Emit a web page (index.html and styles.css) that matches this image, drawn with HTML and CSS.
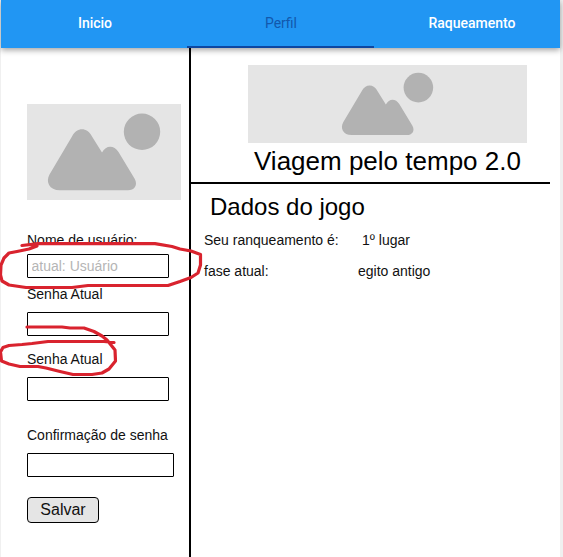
FILE: index.html
```html
<!DOCTYPE html>
<html lang="pt-BR">
<head>
<meta charset="utf-8">
<title>Perfil</title>
<link rel="stylesheet" href="styles.css">
</head>
<body>
<svg class="defs" width="0" height="0">
  <symbol id="placeholder" viewBox="0 0 154 96">
    <path d="M45 32.500 C50 22.800 60 22.800 65 32.500 L75 48.500 C79 40.800 87 40.800 91.500 48 L107.500 74.500 C111.500 81.500 107 86.300 101 86.300 H33 C22 86.300 18.500 77.500 22.500 70.500 Z"/>
    <circle cx="115" cy="27.800" r="18.200"/>
  </symbol>
</svg>
<div class="page">
  <nav class="tabs">
    <a class="tab">Inicio</a>
    <a class="tab active">Perfil</a>
    <a class="tab">Raqueamento</a>
  </nav>
  <div class="content">
    <form class="sidebar">
      <svg class="picture avatar"><use href="#placeholder"/></svg>
      <label class="label">Nome de usuário:</label>
      <input class="field" placeholder="atual: Usuário">
      <label class="label current">Senha Atual</label>
      <input class="field">
      <label class="label repeat">Senha Atual</label>
      <input class="field">
      <label class="label confirm">Confirmação de senha</label>
      <input class="field wide">
      <button class="save" type="button">Salvar</button>
    </form>
    <main class="main">
      <header class="hero">
        <svg class="picture banner"><use href="#placeholder"/></svg>
        <h1 class="title">Viagem pelo tempo 2.0</h1>
      </header>
      <h2 class="subtitle">Dados do jogo</h2>
      <dl class="stats">
        <dt>Seu ranqueamento é:</dt><dd class="rank">1º lugar</dd>
        <dt>fase atual:</dt><dd>egito antigo</dd>
      </dl>
    </main>
  </div>
</div>
<svg class="marks" width="563" height="557" viewBox="0 0 563 557">
  <path d="M22 245.500 L30 244.500 L37 246 L29 249 L17 251.500 L9 253 L4 258 L1 265 L0.500 275 L2 281 L9 285 L26 287.500 H72 L88 285.500 H168 L180 281.500 L191 277.500 L198 273 L200.500 265 V254.500 L191 251 L180 249 L172 246.500 L155 243.700 H38 L22 245.500"/>
  <path d="M27 327 H62 L70 328 H84 L94 331.500 L102 336 L107 340 L111 345 L115 350 L115.500 361 L109 369 L102 373 L92 374.500 H73 L60 371.500 L46 368 L38 366.500 H20 L9 364 L1.500 361 L0.500 352 L3 347.500 L9 345.500 L22 344.500 L32 343.500 L48 341.500 H104 L114 342.500"/>
</svg>
</body>
</html>
```
FILE: styles.css
```css
* {
  box-sizing: border-box;
}

body {
  margin: 0;
  height: 557px;
  overflow: hidden;
  background: #fff;
  font: 14px/16px "Liberation Sans", Arial, sans-serif;
  color: #111;
}

.defs {
  position: absolute;
}

.page {
  width: 563px;
  height: 557px;
  display: flex;
  flex-direction: column;
  border-left: 1px solid #f0f0f0;
  border-right: 3px solid #f0f0f0;
}

.tabs {
  position: relative;
  z-index: 1;
  flex: none;
  display: grid;
  grid-template-columns: 186px 187px 1fr;
  height: 48px;
  background: #2196f3;
  box-shadow: 0 2px 6px rgba(0, 0, 0, .38);
  font: 500 14px/46px Roboto, sans-serif;
  color: #fff;
  text-align: center;
}

.tab.active {
  padding-left: 1px;
  color: #1258ac;
  font-weight: 400;
  border-bottom: 2px solid #0d47a1;
}

.tab:last-child {
  padding-left: 10px;
}

.tab:first-child {
  padding-left: 2px;
}

.content {
  flex: 1;
  display: flex;
}

.sidebar {
  width: 190px;
  flex: none;
  display: flex;
  flex-direction: column;
  align-items: flex-start;
  padding: 56px 0 0 26px;
  border-right: 2px solid #000;
}

.picture {
  display: block;
  background: #e5e5e5;
  fill: #b2b2b2;
}

.avatar {
  width: 154px;
  height: 96px;
  margin-bottom: 32px;
}

.field {
  width: 142px;
  height: 24px;
  margin: 6px 0 0;
  padding: 0 3.5px;
  border: 1px solid #000;
  border-radius: 1px;
  background: #fff;
  font: inherit;
}

.field::placeholder {
  color: #b5b5b5;
}

.current {
  margin-top: 8px;
}

.current + .field,
.repeat + .field,
.confirm + .field {
  margin-top: 10px;
}

.repeat {
  margin-top: 15px;
}

.confirm {
  margin-top: 26px;
}

.wide {
  width: 147px;
}

.save {
  width: 72px;
  height: 26px;
  margin: 20px 0 0;
  padding: 0;
  border: 1px solid #000;
  border-radius: 4px;
  background: #e5e5e5;
  font: 16px/24px "Liberation Sans", Arial, sans-serif;
  color: #111;
}

.main {
  flex: 1;
}

.hero {
  width: 359px;
  height: 136px;
  padding-top: 17px;
  border-bottom: 2px solid #000;
}

.banner {
  width: 279px;
  height: 78px;
  margin-left: 57px;
}

.title,
.subtitle {
  margin: 0;
  font-weight: 400;
  color: #000;
}

.title {
  padding-left: 63px;
  font-size: 26px;
  line-height: 36px;
}

.subtitle {
  margin: 9px 0 11px 19px;
  font-size: 24px;
  line-height: 28px;
}

.stats {
  display: grid;
  grid-template-columns: 154px 1fr;
  row-gap: 15px;
  margin: 0 0 0 13px;
}

.stats dd {
  margin: 0;
}

.stats .rank {
  padding-left: 4px;
}

.marks {
  position: absolute;
  top: 0;
  left: 0;
  z-index: 2;
  fill: none;
  stroke: #d9232e;
  stroke-width: 3.2;
  stroke-linecap: round;
  stroke-linejoin: round;
  pointer-events: none;
}
```
